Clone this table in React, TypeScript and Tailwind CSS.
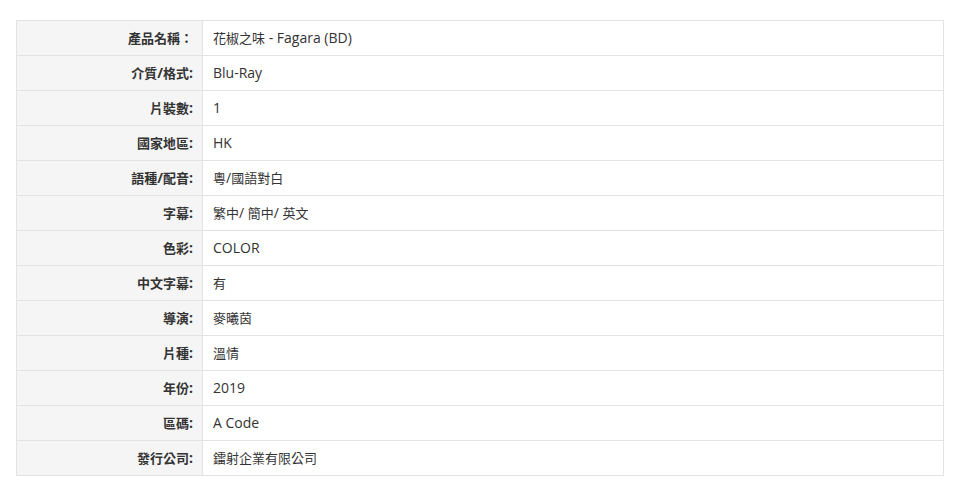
import React from "react";

const rows: [string, string][] = [
  ["產品名稱：", "花椒之味 - Fagara (BD)"],
  ["介質/格式:", "Blu-Ray"],
  ["片裝數:", "1"],
  ["國家地區:", "HK"],
  ["語種/配音:", "粵/國語對白"],
  ["字幕:", "繁中/ 簡中/ 英文"],
  ["色彩:", "COLOR"],
  ["中文字幕:", "有"],
  ["導演:", "麥曦茵"],
  ["片種:", "溫情"],
  ["年份:", "2019"],
  ["區碼:", "A Code"],
  ["發行公司:", "鐳射企業有限公司"],
];

function Mixed({ text }: { text: string }) {
  const parts = text.split(/([\u0000-\u024f]+)/).filter((p) => p.length > 0);
  return (
    <>
      {parts.map((p, i) =>
        /^[\u0000-\u024f]+$/.test(p) ? (
          <span key={i} className="text-[14px]">
            {p}
          </span>
        ) : (
          <span key={i} className="text-[13px]">
            {p}
          </span>
        )
      )}
    </>
  );
}

export default function App() {
  return (
    <div
      className="bg-white w-[961px] h-[496px] pt-[20px] pl-[16px]"
      style={{ fontFamily: '"Open Sans", "Noto Sans CJK TC", sans-serif' }}
    >
      <table className="w-[928px] border-collapse text-[13px] leading-[20px] text-[#333]">
        <tbody>
          {rows.map(([k, v]) => (
            <tr key={k} className="h-[35px]">
              <td className="w-[186px] border border-[#e3e3e3] bg-[#f5f5f5] pr-[9px] text-right font-bold align-middle">
                <Mixed text={k} />
              </td>
              <td className="border border-[#e3e3e3] bg-white pl-[10px] align-middle">
                <Mixed text={v} />
              </td>
            </tr>
          ))}
        </tbody>
      </table>
    </div>
  );
}
